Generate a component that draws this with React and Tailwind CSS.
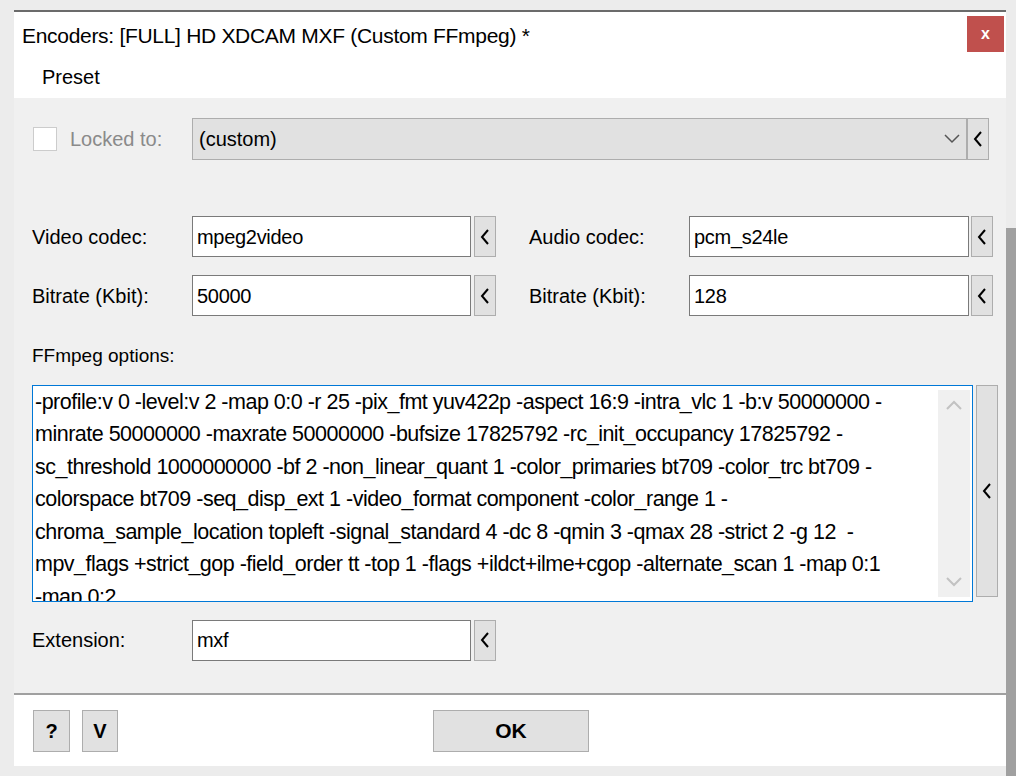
export default function App() {
  const font = { fontFamily: '"Liberation Sans", Arial, sans-serif' };
  const Arrow = ({ h = "h-[41px]", w = "w-[22px]" }) => (
    <div className={`${w} ${h} bg-[#e1e1e1] border border-[#adadad] flex items-center justify-center shrink-0`}>
      <svg width="10" height="18" viewBox="0 0 10 18"><path d="M8 2 L2 9 L8 16" stroke="#000" strokeWidth="2" fill="none" /></svg>
    </div>
  );
  const Input = ({ v, w }) => (
    <div className={`${w} h-[41px] bg-white border border-[#7a7a7a] flex items-center px-[4px] text-[20px] text-black tracking-[-0.3px]`}>{v}</div>
  );
  const lines = [
    "-profile:v 0 -level:v 2 -map 0:0 -r 25 -pix_fmt yuv422p -aspect 16:9 -intra_vlc 1 -b:v 50000000 -",
    "minrate 50000000 -maxrate 50000000 -bufsize 17825792 -rc_init_occupancy 17825792 -",
    "sc_threshold 1000000000 -bf 2 -non_linear_quant 1 -color_primaries bt709 -color_trc bt709 -",
    "colorspace bt709 -seq_disp_ext 1 -video_format component -color_range 1 -",
    "chroma_sample_location topleft -signal_standard 4 -dc 8 -qmin 3 -qmax 28 -strict 2 -g 12  -",
    "mpv_flags +strict_gop -field_order tt -top 1 -flags +ildct+ilme+cgop -alternate_scan 1 -map 0:1",
    "-map 0:2",
  ];
  return (
    <div className="w-[1016px] h-[776px] bg-[#ececec] relative overflow-hidden flex" style={font}>
      <div className="absolute right-0 top-[228px] w-[10px] h-[548px] bg-[#a0a0a0]" />
      <div className="ml-[14px] mt-[10px] w-[992px] h-[756px] flex flex-col border-t-[2px] border-[#6b6b6b] bg-white">
        <div className="h-[86px] bg-white flex flex-col">
          <div className="flex items-start justify-between pl-[8px] pr-[2px] pt-[4px]">
            <div className="text-[21px] text-black mt-[4px] tracking-[-0.3px]">Encoders: [FULL] HD XDCAM MXF (Custom FFmpeg) *</div>
            <div className="w-[37px] h-[36px] bg-[#c0504d] text-white text-[16px] flex items-center justify-center font-bold">x</div>
          </div>
          <div className="pl-[28px] mt-[10px] text-[20px] text-black">Preset</div>
        </div>
        <div className="flex-1 bg-[#f0f0f0] pl-[18px] pr-[8px] pt-[20px] flex flex-col">
          <div className="flex items-center h-[42px]">
            <div className="w-[24px] h-[24px] bg-white border border-[#cccccc] ml-[1px]" />
            <div className="ml-[13px] text-[20px] text-[#8a8a8a] w-[122px]">Locked to:</div>
            <div className="w-[775px] h-[42px] bg-[#e1e1e1] border border-[#adadad] flex items-center justify-between px-[6px] text-[20px] text-black">
              <span>(custom)</span>
              <svg width="16" height="10" viewBox="0 0 16 10"><path d="M1 1 L8 8 L15 1" stroke="#555" strokeWidth="1.5" fill="none" /></svg>
            </div>
            <Arrow h="h-[42px]" />
          </div>
          <div className="flex items-center mt-[56px]">
            <div className="w-[160px] text-[20px] text-black">Video codec:</div>
            <Input v="mpeg2video" w="w-[279px]" />
            <div className="ml-[3px]"><Arrow /></div>
            <div className="ml-[33px] w-[160px] text-[20px] text-black">Audio codec:</div>
            <Input v="pcm_s24le" w="w-[280px]" />
            <div className="ml-[2px]"><Arrow /></div>
          </div>
          <div className="flex items-center mt-[18px]">
            <div className="w-[160px] text-[20px] text-black">Bitrate (Kbit):</div>
            <Input v="50000" w="w-[279px]" />
            <div className="ml-[3px]"><Arrow /></div>
            <div className="ml-[33px] w-[160px] text-[20px] text-black">Bitrate (Kbit):</div>
            <Input v="128" w="w-[280px]" />
            <div className="ml-[2px]"><Arrow /></div>
          </div>
          <div className="mt-[26px] text-[19px] text-black">FFmpeg options:</div>
          <div className="flex mt-[14px]">
            <div className="w-[944px] h-[217px] bg-white border border-[#0078d7] flex">
              <div className="flex-1 pl-[2px] pt-0 text-[21.5px] leading-[32.5px] text-black tracking-[-0.5px] whitespace-pre overflow-hidden">
                {lines.map((l, i) => <div key={i}>{l}</div>)}
              </div>
              <div className="w-[32px] my-[4px] mr-[2px] bg-[#f0f0f0] flex flex-col justify-between items-center py-[10px] shrink-0">
                <svg width="16" height="10" viewBox="0 0 16 10"><path d="M1 9 L8 2 L15 9" stroke="#c2c2c2" strokeWidth="2" fill="none" /></svg>
                <svg width="16" height="10" viewBox="0 0 16 10"><path d="M1 1 L8 8 L15 1" stroke="#c2c2c2" strokeWidth="2" fill="none" /></svg>
              </div>
            </div>
            <div className="ml-[3px]"><Arrow h="h-[212px]" /></div>
          </div>
          <div className="flex items-center mt-[18px]">
            <div className="w-[160px] text-[20px] text-black">Extension:</div>
            <Input v="mxf" w="w-[279px]" />
            <div className="ml-[3px]"><Arrow /></div>
          </div>
        </div>
        <div className="h-[2px] bg-[#a0a0a0]" />
        <div className="h-[71px] bg-white flex items-center pl-[19px]">
          <div className="w-[37px] h-[42px] bg-[#e1e1e1] border border-[#adadad] flex items-center justify-center text-[20px] font-bold">?</div>
          <div className="ml-[12px] w-[36px] h-[42px] bg-[#e1e1e1] border border-[#adadad] flex items-center justify-center text-[20px] font-bold">V</div>
          <div className="ml-[315px] w-[156px] h-[42px] bg-[#e1e1e1] border border-[#adadad] flex items-center justify-center text-[21px] font-bold">OK</div>
        </div>
      </div>
    </div>
  );
}
